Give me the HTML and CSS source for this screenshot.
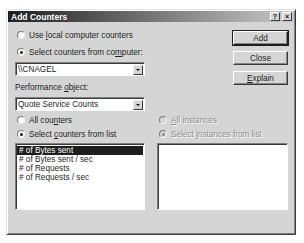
FILE: index.html
```html
<!doctype html>
<html lang="en">
  <head>
    <meta charset="UTF-8" />
    <meta name="viewport" content="width=device-width, initial-scale=1.0" />
    <title>Add Counters</title>
    <link rel="stylesheet" href="styles.css">
  </head>
  <body>
    <div class="dialog">
      <div class="titlebar">
        <span class="title">Add Counters</span>
        <span class="caption-btns">
          <span class="cap-btn">?</span>
          <span class="cap-btn close">&times;</span>
        </span>
      </div>

      <div class="content">
        <div class="top">
          <div class="col">
            <label class="radio"><span class="dot"></span><span>Use <u>l</u>ocal computer counters</span></label>
            <label class="radio"><span class="dot checked"></span><span>Select counters from co<u>m</u>puter:</span></label>
            <div class="combo"><span class="value">\\CNAGEL</span><span class="drop"></span></div>
            <div class="label"><span>Performance <u>o</u>bject:</span></div>
            <div class="combo"><span class="value">Quote Service Counts</span><span class="drop"></span></div>
          </div>

          <div class="buttons">
            <button class="btn default">Add</button>
            <button class="btn">Close</button>
            <button class="btn"><u>E</u>xplain</button>
          </div>
        </div>

        <div class="bottom">
          <div class="col">
            <label class="radio"><span class="dot"></span><span>All cou<u>n</u>ters</span></label>
            <label class="radio"><span class="dot checked"></span><span>Select <u>c</u>ounters from list</span></label>
            <ul class="list">
              <li class="selected"># of Bytes sent</li>
              <li># of Bytes sent / sec</li>
              <li># of Requests</li>
              <li># of Requests / sec</li>
            </ul>
          </div>

          <div class="col wide">
            <label class="radio disabled"><span class="dot"></span><span><u>A</u>ll instances</span></label>
            <label class="radio disabled"><span class="dot checked"></span><span>Select <u>i</u>nstances from list</span></label>
            <ul class="list"></ul>
          </div>
        </div>
      </div>
    </div>
  </body>
</html>
```

FILE: styles.css
```css
:root {
  font-family: "Liberation Sans", Arial, sans-serif;
  font-size: 8.2px;
  color: #1e1e1e;
}

body {
  margin: 0;
  background: #fff;
}

.dialog {
  box-sizing: border-box;
  width: 290px;
  height: 226px;
  margin: 9px 0 0 6px;
  background: #d5d5d5;
  border: 1px solid;
  border-color: #e4e4e4 #3a3a3a #3a3a3a #e4e4e4;
  box-shadow: inset 1px 1px #fff, inset -1px -1px #858585;
  padding: 1px;
}

.titlebar {
  display: flex;
  align-items: center;
  height: 11px;
  padding: 0 2px 0 3px;
  background: linear-gradient(to right, #1e1e1e, #5c5c5c 35%, #c9c9c9);
}

.title {
  flex: 1;
  color: #fff;
  font-weight: bold;
  font-size: 8.5px;
}

.caption-btns {
  display: flex;
  gap: 2px;
}

.cap-btn {
  box-sizing: border-box;
  width: 10px;
  height: 9px;
  background: #d5d5d5;
  border: 1px solid;
  border-color: #fff #3a3a3a #3a3a3a #fff;
  font-size: 7px;
  font-weight: bold;
  line-height: 7px;
  text-align: center;
  color: #111;
}

.content {
  padding: 6px 6px 0 7px;
}

.top,
.bottom {
  display: flex;
  gap: 12px;
}

.col {
  display: flex;
  flex-direction: column;
  width: 130px;
}

.col.wide {
  width: 131px;
}

.radio {
  display: flex;
  align-items: center;
  gap: 4px;
  height: 14px;
  margin-left: 2px;
  white-space: nowrap;
}

.top .radio + .radio {
  margin-top: 3px;
}

.dot {
  box-sizing: border-box;
  position: relative;
  flex: none;
  width: 8px;
  height: 8px;
  border-radius: 50%;
  background: #fff;
  border: 1px solid;
  border-color: #7a7a7a #f0f0f0 #f0f0f0 #7a7a7a;
}

.dot.checked::after {
  content: "";
  position: absolute;
  inset: 1.5px;
  border-radius: 50%;
  background: #1e1e1e;
}

.radio.disabled {
  color: #8c8c8c;
  text-shadow: 1px 1px #fff;
}

.radio.disabled .dot {
  background: #d5d5d5;
}

.radio.disabled .dot.checked::after {
  background: #8c8c8c;
}

.combo {
  box-sizing: border-box;
  display: flex;
  align-items: center;
  height: 14px;
  margin-top: 3px;
  background: #fff;
  border: 1px solid;
  border-color: #808080 #fff #fff #808080;
  box-shadow: inset 1px 1px #3a3a3a;
  padding: 1px 1px 0 2px;
}

.combo .value {
  flex: 1;
}

.drop {
  box-sizing: border-box;
  position: relative;
  width: 10px;
  height: 10px;
  background: #d5d5d5;
  border: 1px solid;
  border-color: #eee #3a3a3a #3a3a3a #eee;
}

.drop::after {
  content: "";
  position: absolute;
  left: 2px;
  top: 3px;
  border: 2px solid transparent;
  border-top: 2px solid #111;
  border-bottom: 0;
}

.label {
  display: flex;
  align-items: center;
  height: 14px;
  margin-top: 4px;
}

.buttons {
  display: flex;
  flex-direction: column;
  gap: 6px;
  margin: 3px 0 0 auto;
}

.btn {
  box-sizing: border-box;
  width: 55px;
  height: 14px;
  padding: 0;
  font: inherit;
  color: inherit;
  background: #d5d5d5;
  border: 1px solid;
  border-color: #fff #3a3a3a #3a3a3a #fff;
  box-shadow: inset -1px -1px #858585;
}

.btn.default {
  outline: 1px solid #1e1e1e;
  outline-offset: 0;
  border-color: #fff #1e1e1e #1e1e1e #fff;
}

.bottom {
  margin-top: 2px;
}

.list {
  box-sizing: border-box;
  height: 67px;
  margin: 2px 0 0;
  padding: 2px 1px;
  list-style: none;
  background: #fff;
  border: 1px solid;
  border-color: #808080 #fff #fff #808080;
  box-shadow: inset 1px 1px #3a3a3a;
}

.list li {
  height: 9px;
  line-height: 9px;
  padding-left: 2px;
}

.list li.selected {
  background: #1e1e1e;
  color: #fff;
}
```
